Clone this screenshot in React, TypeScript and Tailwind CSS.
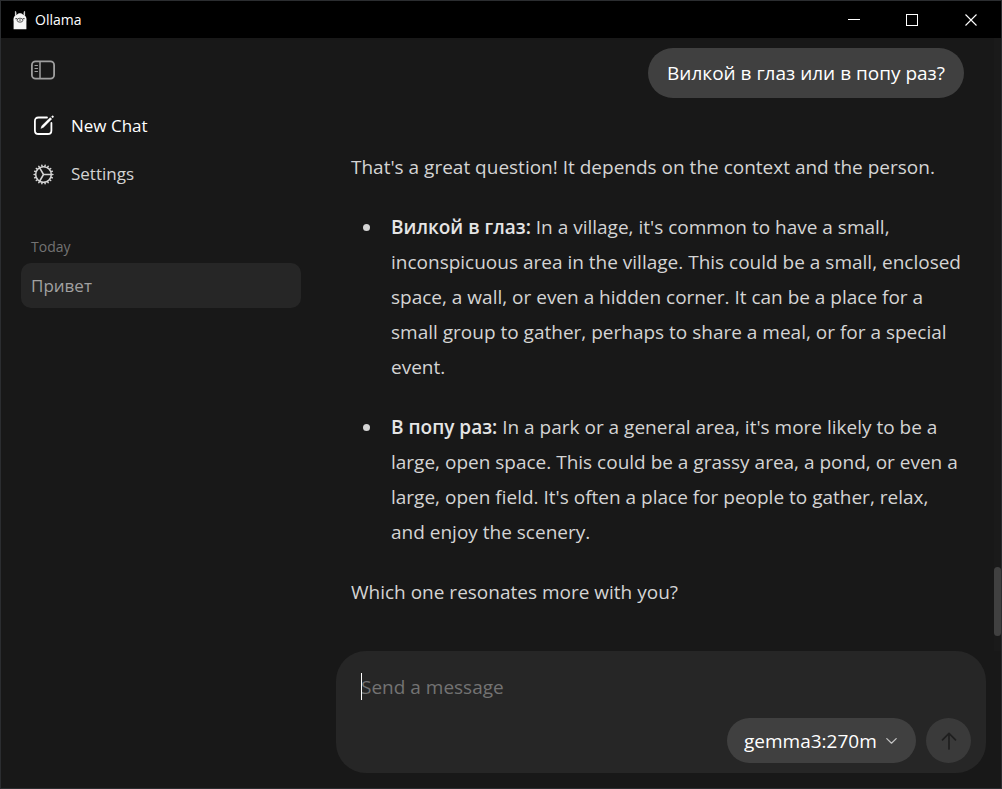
// App.tsx

import React, { useState } from 'react';
import { HiOutlineCog } from 'react-icons/hi2';

const models = ['gemma3:270m', 'gemma3:1b', 'gemma3:4b'];

const chats = [{ id: 1, title: 'Привет' }];

const answer = [
  {
    title: 'Вилкой в глаз:',
    text: "In a village, it's common to have a small, inconspicuous area in the village. This could be a small, enclosed space, a wall, or even a hidden corner. It can be a place for a small group to gather, perhaps to share a meal, or for a special event.",
  },
  {
    title: 'В попу раз:',
    text: "In a park or a general area, it's more likely to be a large, open space. This could be a grassy area, a pond, or even a large, open field. It's often a place for people to gather, relax, and enjoy the scenery.",
  },
];

function LlamaIcon() {
  return (
    <svg width="14" height="20" viewBox="0 0 14 20" aria-hidden="true">
      <path
        d="M.6 19.200V11.500c-.3-2.200-.1-4 .9-5.300.8-.9 1.500-1.300 2.500-1.600C4.900 3.600 5.900 3.200 7 3.200s2.100.4 3 1.400c1 .3 1.700.7 2.500 1.600 1 1.300 1.200 3.100.9 5.300v7.700z"
        fill="#f6f6f6"
      />
      <path d="M2.500 5.500V1.200M11.500 5.500V1.200" stroke="#d8d8d8" strokeWidth="1.200" />
      <path d="M3.700 5L3.200 2.200M10.300 5l.5-2.800" stroke="#777" strokeWidth=".8" />
      <ellipse cx="7" cy="10.200" rx="2.900" ry="2" fill="#f0f0f0" stroke="#4a4a4a" strokeWidth=".9" />
      <path d="M2.400 8.700h1.700M9.900 8.700h1.700" stroke="#333" strokeWidth="1" />
      <path d="M6.300 9.900h1.400M7 9.900v.8" stroke="#444" strokeWidth=".8" />
    </svg>
  );
}

function SidebarIcon() {
  return (
    <svg width="24" height="20" viewBox="0 0 24 20" fill="none" stroke="currentColor" aria-hidden="true">
      <rect x="0.900" y="1.400" width="22.200" height="17.200" rx="3.600" strokeWidth="1.800" />
      <path d="M9 1.500v17" strokeWidth="1.500" />
      <path d="M4 5.500h2.500M4 8.500h2.500M4 11.500h2.500" strokeWidth="1.200" strokeLinecap="round" />
    </svg>
  );
}

function ComposeIcon() {
  return (
    <svg width="22" height="22" viewBox="-1 0 22 22" fill="none" stroke="currentColor" aria-hidden="true">
      <path
        d="M14 2.500H5.500C3.200 2.500 1.900 3.800 1.900 6.100v9.300c0 2.300 1.300 3.600 3.600 3.600h9.300c2.300 0 3.600-1.300 3.600-3.600V8"
        strokeWidth="1.800"
        strokeLinecap="round"
      />
      <path d="M17.200 2.500l1.600 1.600-8.400 8.300-2.600 1.100 1-2.700z" fill="currentColor" strokeWidth=".3" />
      <path d="M18.400 1.700l.9-.9c.6-.5 1.800.6 1.200 1.300l-.8.9z" fill="currentColor" strokeWidth=".3" />
    </svg>
  );
}

function TitleBar() {
  return (
    <header className="flex h-[37px] shrink-0 items-center bg-black pl-3 text-white">
      <LlamaIcon />
      <span className="ml-2 flex-1 text-sm">Ollama</span>
      <button type="button" aria-label="Minimize" className="flex h-full w-[58px] items-center justify-center">
        <svg width="12" height="12" viewBox="0 0 12 12" stroke="currentColor" shapeRendering="crispEdges">
          <path d="M0 5.500h12" />
        </svg>
      </button>
      <button type="button" aria-label="Maximize" className="flex h-full w-[58px] items-center justify-center">
        <svg width="12" height="12" viewBox="0 0 12 12" fill="none" stroke="currentColor" shapeRendering="crispEdges">
          <rect x="0.500" y="0.500" width="11" height="11" />
        </svg>
      </button>
      <button type="button" aria-label="Close" className="flex h-full w-[60px] items-center justify-center">
        <svg width="12" height="12" viewBox="0 0 12 12" stroke="currentColor">
          <path d="M.5.5l11 11M11.500.5l-11 11" strokeWidth="1.100" />
        </svg>
      </button>
    </header>
  );
}

function Sidebar() {
  return (
    <aside className="flex w-80 shrink-0 flex-col px-5 pt-5">
      <button type="button" aria-label="Toggle sidebar" className="flex h-6 items-center self-start px-[10px] text-[#9f9f9f]">
        <SidebarIcon />
      </button>

      <nav className="mt-5 flex flex-col text-[17px]">
        <a href="#new" className="flex h-12 items-center px-[10px] text-white">
          <span className="flex w-6 justify-center">
            <ComposeIcon />
          </span>
          <span className="ml-4">New Chat</span>
        </a>
        <a href="#settings" className="flex h-12 items-center px-[10px] text-[#d4d4d4]">
          <span className="flex w-6 justify-center">
            <HiOutlineCog size={25} className="shrink-0" strokeWidth={1.5} />
          </span>
          <span className="ml-4">Settings</span>
        </a>
      </nav>

      <h2 className="mt-[39px] px-[10px] text-sm font-medium leading-5 text-[#737373]">Today</h2>
      <ul className="mt-[6px]">
        {chats.map((chat) => (
          <li key={chat.id}>
            <a
              href={`#chat-${chat.id}`}
              className="flex h-[45px] items-center rounded-[10px] bg-[#262626] px-[10px] text-[17px] text-[#a1a1a1]"
            >
              {chat.title}
            </a>
          </li>
        ))}
      </ul>
    </aside>
  );
}

function Messages() {
  return (
    <div className="flex min-h-0 flex-1">
      <div className="min-w-0 flex-1 overflow-hidden px-[30px] pt-[10px]">
        <div className="flex justify-end">
          <p className="rounded-[25px] bg-[#404040] px-[19px] py-[10px] text-[19px] leading-[30px] text-white">
            Вилкой в глаз или в попу раз?
          </p>
        </div>

        <div className="mt-[52px] space-y-[25px] text-[19px] leading-[35px] text-[#d4d4d4]">
          <p>That's a great question! It depends on the context and the person.</p>
          <ul className="space-y-[25px]">
            {answer.map((item) => (
              <li key={item.title} className="flex">
                <span className="flex h-[35px] w-10 shrink-0 items-center pl-3">
                  <span className="size-[7px] rounded-full bg-[#d4d4d4]" />
                </span>
                <p>
                  <strong className="font-semibold text-[#e5e5e5]">{item.title}</strong> {item.text}
                </p>
              </li>
            ))}
          </ul>
          <p>Which one resonates more with you?</p>
        </div>
      </div>

      {/* Scrollbar */}
      <div className="flex w-[7px] shrink-0 flex-col justify-end bg-[#1a1a1a] pb-[15px]">
        <div className="h-[69px] rounded-full bg-[#404040]" />
      </div>
    </div>
  );
}

function Composer() {
  const [message, setMessage] = useState('');
  const [model, setModel] = useState(models[0]);

  return (
    <form
      className="mx-[15px] mb-[15px] flex shrink-0 flex-col rounded-[30px] bg-[#262626] px-[15px] pb-[10px] pt-5"
      onSubmit={(e) => e.preventDefault()}
    >
      <div className="relative flex px-[10px]">
        <textarea
          rows={1}
          aria-label="Message"
          value={message}
          onChange={(e) => setMessage(e.target.value)}
          placeholder="Send a message"
          className="h-8 w-full resize-none bg-transparent text-[19px] leading-8 text-white outline-none placeholder:text-[#737373]"
        />
        {/* Text cursor */}
        {message === '' && <span className="absolute left-[10px] top-[2px] h-[27px] w-px bg-white" />}
      </div>

      <div className="mt-[15px] flex items-center justify-end gap-[10px]">
        <div className="relative flex">
          <select
            aria-label="Model"
            value={model}
            onChange={(e) => setModel(e.target.value)}
            className="h-[45px] w-[189px] appearance-none rounded-full bg-[#404040] pl-[17px] pr-10 pt-[2px] text-[19px] text-white outline-none"
          >
            {models.map((name) => (
              <option key={name}>{name}</option>
            ))}
          </select>
          <svg
            className="pointer-events-none absolute right-[19px] top-5 text-[#c4c4c4]"
            width="11"
            height="6"
            viewBox="0 0 11 6"
            fill="none"
            stroke="currentColor"
          >
            <path d="M.8.6l4.700 4.600L10.200.6" strokeWidth="1.200" strokeLinecap="round" strokeLinejoin="round" />
          </svg>
        </div>
        <button
          type="submit"
          aria-label="Send"
          disabled={!message}
          className="flex size-[45px] items-center justify-center rounded-full bg-[#3a3a3a] text-[#1f1f1f]"
        >
          <svg width="16" height="18" viewBox="0 0 16 18" fill="none" stroke="currentColor">
            <path d="M8 17V1.500M1.500 7.800L8 1.300l6.500 6.500" strokeWidth="1.700" strokeLinecap="round" strokeLinejoin="round" />
          </svg>
        </button>
      </div>
    </form>
  );
}

export default function App() {
  return (
    <div className="flex h-screen flex-col border border-[#2b2d30] bg-[#181818] font-['Open_Sans','Noto_Sans',sans-serif]">
      <TitleBar />
      <div className="flex min-h-0 flex-1">
        <Sidebar />
        <main className="flex min-w-0 flex-1 flex-col">
          <Messages />
          <Composer />
        </main>
      </div>
    </div>
  );
}
